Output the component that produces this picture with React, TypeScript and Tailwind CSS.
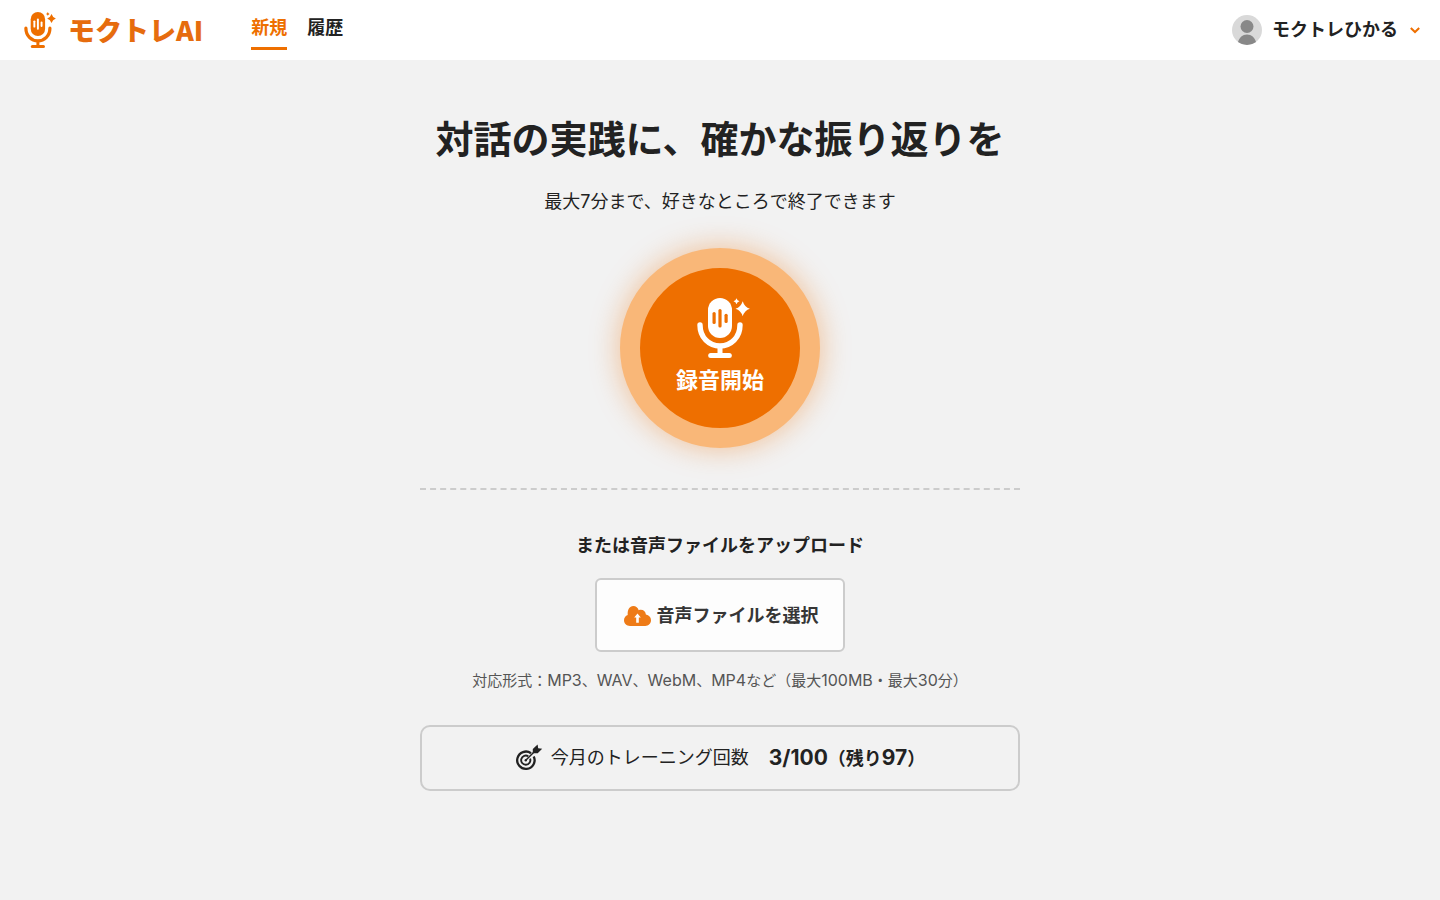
import { useRef } from "react";

function MicIcon({ className, bars }: { className: string; bars: string }) {
  return (
    <svg viewBox="0 0 53 60" className={className} fill="currentColor" aria-hidden="true">
      <rect x="11" y="0" width="24" height="40" rx="12" />
      <g className={bars}>
        <rect x="15.5" y="14" width="3.2" height="12" rx="1.6" />
        <rect x="21.4" y="11" width="3.2" height="18.500" rx="1.6" />
        <rect x="27.5" y="15.700" width="3.2" height="9.300" rx="1.6" />
      </g>
      <path
        d="M3 27C3 39.500 12 48 23 48C34 48 43 39.500 43 27"
        fill="none"
        stroke="currentColor"
        strokeWidth="5.400"
        strokeLinecap="round"
      />
      <rect x="20.500" y="48" width="5" height="9" />
      <rect x="11.200" y="55" width="23.600" height="5" rx="2.500" />
      <path d="M45.700 3.200Q47.500 9 52.900 10.700Q47.500 12.400 45.700 18.200Q43.900 12.400 38.500 10.700Q43.900 9 45.700 3.200Z" />
      <path d="M39.500 .2Q40.200 2.500 42.500 3.200Q40.200 3.900 39.500 6.200Q38.800 3.900 36.500 3.200Q38.800 2.500 39.500 .2Z" />
    </svg>
  );
}

function CloudIcon() {
  return (
    <svg viewBox="0 0 27 20" className="h-5 w-[27px]" aria-hidden="true">
      <path
        d="M6 20C2.500 20 0 17.500 0 14.300C0 11.800 1.500 9.800 3.700 9C3.400 3.500 5.500 0 9.300 0C12 0 14 1.700 14.700 4.200C18.200 3 21.600 4.800 21.900 8.600C25 9 27 11.300 27 14.300C27 17.500 24.500 20 21.300 20Z"
        fill="#ee6f00"
      />
      <path d="M13.500 7.600L16.800 11.600H14.800V16.800H12.200V11.600H10.200Z" fill="white" />
    </svg>
  );
}

function TargetIcon() {
  return (
    <svg viewBox="0 0 28 28" className="size-7" fill="none" stroke="#222" aria-hidden="true">
      <path d="M16 9.200A8.700 8.700 0 1 0 18.700 12.400" strokeWidth="2.300" />
      <path d="M13.300 12.300A4.600 4.600 0 1 0 15.100 14.600" strokeWidth="1.900" />
      <path d="M10.800 16.200L20 7" strokeWidth="1.500" />
      <circle cx="10.800" cy="16.200" r="1.200" fill="#222" stroke="none" />
      <path d="M17.800 9.200V5L22.600 .600L23.200 4.200L27.200 4.800L22.700 9.200Z" fill="#222" stroke="none" />
    </svg>
  );
}

export default function App() {
  const fileInput = useRef<HTMLInputElement>(null);

  return (
    <div className="min-h-screen bg-[#f2f2f2] font-['Inter','Noto_Sans_CJK_JP',sans-serif] text-lg text-[#222]">
      <header className="flex h-[60px] items-center bg-white px-5">
        <a href="#" className="ml-1 flex items-center gap-3 text-[#e66c0e]">
          <MicIcon className="h-9 w-8 text-[#ee6f00]" bars="fill-white" />
          <span className="font-['Noto_Sans_CJK_JP',sans-serif] text-[27px] leading-9 font-black">モクトレAI</span>
        </a>
        <nav className="ml-12 flex gap-5 leading-[26px] font-bold">
          <a href="#" className="mt-1 border-b-3 border-[#ee6f00] pb-1.5 text-[#ee6f00]">
            新規
          </a>
          <a href="#" className="mt-1">
            履歴
          </a>
        </nav>
        <button type="button" className="ml-auto flex items-center font-bold">
          <svg viewBox="0 0 30 30" className="mr-2.5 size-[30px]" aria-hidden="true">
            <circle cx="15" cy="15" r="15" fill="#d9d9d9" />
            <circle cx="15" cy="11.500" r="6.500" fill="#888" />
            <path d="M6 27C7.300 22.500 10.500 19.500 15 19.500S22.700 22.500 24 27A15 15 0 0 1 6 27Z" fill="#888" />
          </svg>
          モクトレひかる
          <svg viewBox="0 0 10 10" className="ml-3 size-2.5" fill="none" stroke="#ee6f00" strokeWidth="2" aria-hidden="true">
            <path d="M.8 3L5 7L9.200 3" />
          </svg>
        </button>
      </header>

      <main className="mx-auto flex w-full max-w-[600px] flex-col items-center pt-12 text-center">
        <h1 className="text-[38px] leading-[62px] font-bold whitespace-nowrap">対話の実践に、確かな振り返りを</h1>
        <p className="mt-[18px] leading-7">最大7分まで、好きなところで終了できます</p>
        <button
          type="button"
          className="mt-8 flex size-[200px] flex-col items-center rounded-full border-20 border-[#f9b778] bg-[#ee6f00] pt-[30px] text-[22px] leading-8 font-bold text-white shadow-[0_0_30px_rgba(238,111,0,0.4)]"
        >
          <MicIcon className="ml-[7px] h-[60px] w-[53px]" bars="fill-[#ee6f00]" />
          <span className="mt-1.5">録音開始</span>
        </button>
        <hr className="mt-10 w-full border-t-2 border-dashed border-[#ccc]" />
        <h2 className="mt-10 leading-8 font-bold">または音声ファイルをアップロード</h2>
        <input ref={fileInput} id="audio-file" type="file" accept="audio/*,video/mp4" aria-label="音声ファイルを選択" className="hidden" />
        <button
          type="button"
          onClick={() => fileInput.current?.click()}
          className="mt-4 flex h-[74px] w-[250px] items-center justify-center gap-1.5 rounded-md border-2 border-[#c8c8c8] bg-white pt-0.5 pl-0.5 font-bold opacity-90"
        >
          <CloudIcon />
          音声ファイルを選択
        </button>
        <p className="mt-4 text-[15px] leading-6 whitespace-nowrap text-[#555]">
          対応形式：<span className="text-base">MP3</span>、<span className="text-base">WAV</span>、
          <span className="text-base">WebM</span>、<span className="text-base">MP4</span>など（最大
          <span className="text-base">100MB</span>・最大<span className="text-base">30</span>分）
        </p>
        <div className="mt-8 flex h-[66px] w-full items-center justify-center rounded-[10px] border-2 border-[#ccc]">
          <TargetIcon />
          <span className="ml-2">今月のトレーニング回数</span>
          <strong className="ml-5">
            <span className="text-[21px]">3/100</span>（残り<span className="text-[21px]">97</span>）
          </strong>
        </div>
      </main>
    </div>
  );
}
